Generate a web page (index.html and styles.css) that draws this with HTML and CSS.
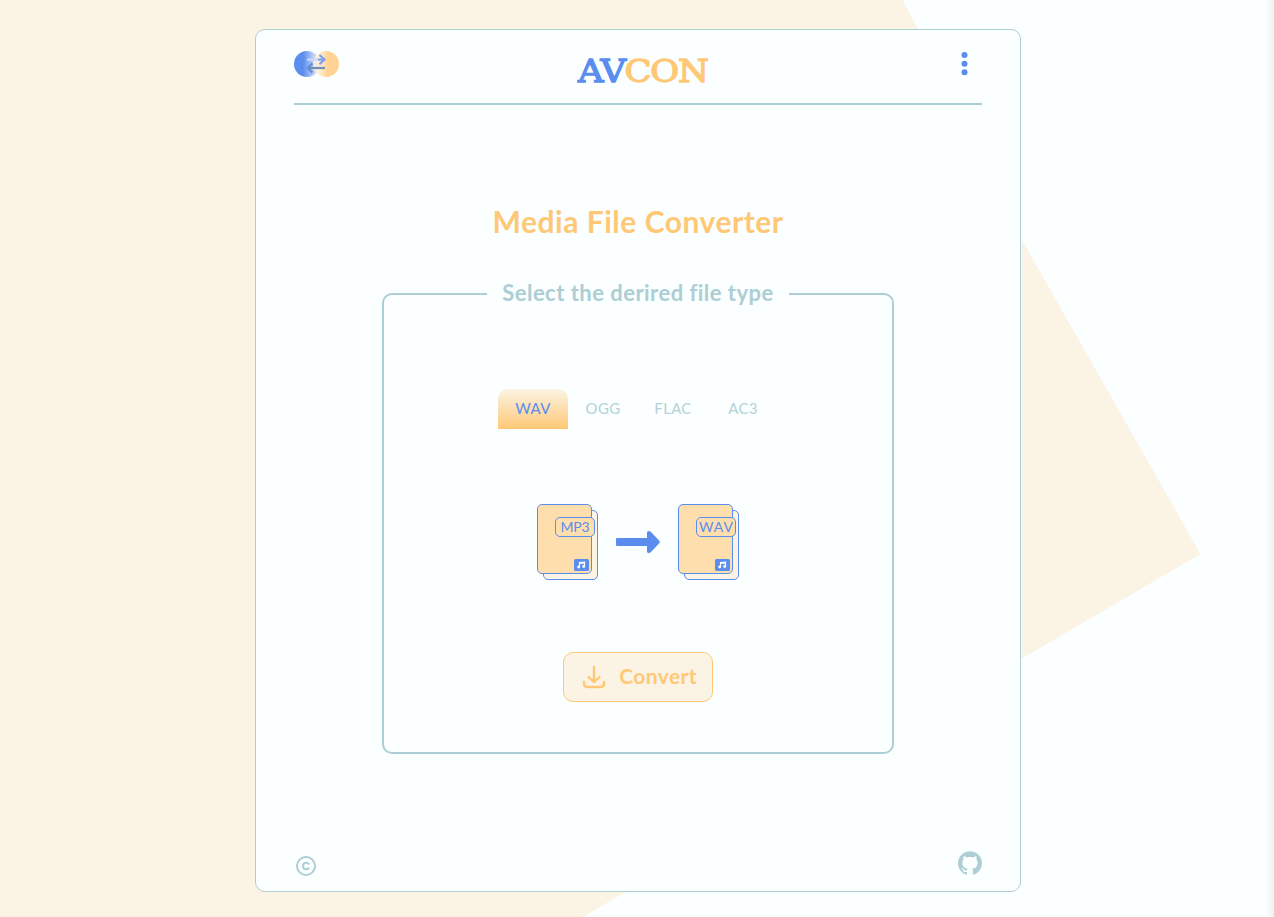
FILE: index.html
```html
<!DOCTYPE html>
<html lang="en">
<head>
<meta charset="utf-8">
<title>AVCON</title>
<link rel="stylesheet" href="styles.css">
</head>
<body>
<svg class="backdrop" viewBox="0 0 1274 917" aria-hidden="true"><path d="M0 0H902.500L918 29L1022 240L1200.500 554L1022 658.500L583 917H0z"/></svg>
<div class="edge"></div>
<div class="card">
  <header class="header">
    <svg class="logo" width="46" height="28" viewBox="0 0 46 28">
      <defs>
        <linearGradient id="blue"><stop offset=".35" stop-color="#5a8dee"/><stop offset="1" stop-color="#fafafd"/></linearGradient>
        <linearGradient id="gold"><stop offset="0" stop-color="#fff9ef" stop-opacity=".6"/><stop offset=".55" stop-color="#ffd394"/></linearGradient>
      </defs>
      <circle cx="13" cy="14" r="13" fill="url(#blue)"/>
      <circle cx="32" cy="14" r="13" fill="url(#gold)"/>
      <g fill="none" stroke-width="2.200">
        <path d="M13 9.600H24" stroke="#c9d9f6"/>
        <path d="M24 9.600H30" stroke="#7ba2ed"/>
        <path d="M25.500 5L30.500 9.600L25.500 14.200" stroke="#7ba2ed"/>
        <path d="M31 18H14" stroke="#7590b4"/>
        <path d="M18.500 13.400L13.800 18L18.500 22.600" stroke="#668bd0"/>
      </g>
    </svg>
    <div class="brand"><span class="brand-av">AV</span><span class="brand-con">CON</span></div>
    <svg class="menu" width="7" height="24" viewBox="0 0 7 24"><circle cx="3.500" cy="3" r="3"/><circle cx="3.500" cy="11.700" r="3"/><circle cx="3.500" cy="20.300" r="3"/></svg>
  </header>
  <main class="main">
    <h1 class="title">Media File Converter</h1>
    <section class="panel">
      <h2 class="legend"><span>Select the derired file type</span></h2>
      <nav class="tabs">
        <div class="tab active">WAV</div><div class="tab">OGG</div><div class="tab">FLAC</div><div class="tab">AC3</div>
      </nav>
      <div class="flow">
        <svg class="file" width="62" height="77" viewBox="0 0 62 77">
          <rect class="back" x="6.500" y="6.500" width="54" height="69" rx="4.500"/>
          <rect class="front" x=".5" y=".5" width="54" height="69" rx="4.500"/>
          <rect class="front" x="18.500" y="13.500" width="39" height="19" rx="4.500"/>
          <text x="38" y="28" textLength="29">MP3</text>
          <rect class="badge" x="37" y="55" width="15" height="12" rx="1.500"/>
          <path class="note" d="M42.500 63V58.600L47.500 58.200V62.500M42.500 59.400L47.500 59"/><circle class="dot" cx="41.700" cy="63" r="1.400"/><circle class="dot" cx="46.700" cy="62.500" r="1.400"/>
        </svg>
        <svg class="arrow" width="44" height="22" viewBox="0 0 44 22"><path d="M1 7H31V1.500Q31 0 33 0Q34 0 35 1L43 9.500Q44.500 11 43 12.500L35 21Q34 22 33 22Q31 22 31 20.500V15H1Q0 15 0 14V8Q0 7 1 7z"/></svg>
        <svg class="file" width="62" height="77" viewBox="0 0 62 77">
          <rect class="back" x="6.500" y="6.500" width="54" height="69" rx="4.500"/>
          <rect class="front" x=".5" y=".5" width="54" height="69" rx="4.500"/>
          <rect class="front" x="18.500" y="13.500" width="39" height="19" rx="4.500"/>
          <text x="38" y="28" textLength="34">WAV</text>
          <rect class="badge" x="37" y="55" width="15" height="12" rx="1.500"/>
          <path class="note" d="M42.500 63V58.600L47.500 58.200V62.500M42.500 59.400L47.500 59"/><circle class="dot" cx="41.700" cy="63" r="1.400"/><circle class="dot" cx="46.700" cy="62.500" r="1.400"/>
        </svg>
      </div>
      <button class="convert">
        <svg width="24" height="24" viewBox="0 0 24 24"><path d="M12 2V17M6.500 12L12 17.200L17.500 12M2 17V18.500Q2 22 5.500 22H18.500Q22 22 22 18.500V17"/></svg>
        <span>Convert</span>
      </button>
    </section>
  </main>
  <footer class="footer">
    <svg class="copyright" width="20" height="20" viewBox="0 0 20 20"><circle cx="10" cy="10" r="9"/><path d="M12.800 8.600C12.500 7.400 11.500 6.700 10 6.700C8 6.700 7 8 7 10C7 12 8 13.300 10 13.300C11.500 13.300 12.500 12.600 12.800 11.400"/></svg>
    <svg class="github" width="24" height="24" viewBox="0 0 24 24"><path d="M12 .297c-6.630 0-12 5.373-12 12 0 5.303 3.438 9.800 8.205 11.385.6.113.82-.258.82-.577 0-.285-.01-1.040-.015-2.040-3.338.724-4.042-1.610-4.042-1.610C4.422 18.070 3.633 17.700 3.633 17.700c-1.087-.744.084-.729.084-.729 1.205.084 1.838 1.236 1.838 1.236 1.070 1.835 2.809 1.305 3.495.998.108-.776.417-1.305.76-1.605-2.665-.3-5.466-1.332-5.466-5.930 0-1.310.465-2.380 1.235-3.220-.135-.303-.54-1.523.105-3.176 0 0 1.005-.322 3.300 1.230.96-.267 1.980-.399 3-.405 1.020.006 2.040.138 3 .405 2.280-1.552 3.285-1.230 3.285-1.230.645 1.653.24 2.873.12 3.176.765.840 1.230 1.910 1.230 3.220 0 4.610-2.805 5.625-5.475 5.920.42.360.81 1.096.81 2.220 0 1.606-.015 2.896-.015 3.286 0 .315.21.690.825.570C20.565 22.092 24 17.592 24 12.297c0-6.627-5.373-12-12-12"/></svg>
  </footer>
</div>
</body>
</html>
```

FILE: styles.css
```css
* { box-sizing: border-box; }
body {
  margin: 0;
  height: 917px;
  padding: 29px 0 25px 255px;
  background: #fbffff;
  font-family: Lato, "Open Sans", sans-serif;
  overflow: hidden;
}
.backdrop { position: absolute; left: 0; top: 0; width: 1274px; height: 917px; fill: #fbf4e4; }
.edge { position: absolute; right: 0; top: 0; width: 9px; height: 917px; background: linear-gradient(90deg, #fbffff, #eef2f1); }
.card {
  position: relative;
  width: 766px;
  height: 863px;
  padding: 0 38px;
  display: flex;
  flex-direction: column;
  background: #fbffff;
  border: 1px solid #acced4;
  border-radius: 10px;
}
.header {
  height: 75px;
  display: grid;
  grid-template-columns: 1fr auto 1fr;
  align-items: start;
  border-bottom: 2px solid #acced4;
}
.logo { margin-top: 20px; }
.brand {
  margin: 22px 0 0 10px;
  font: 31px/38px "DejaVu Serif", serif;
  letter-spacing: -1.2px;
  -webkit-text-stroke-width: 1.3px;
  transform: scaleX(1.14);
}
.brand-av { color: #5a8dee; }
.brand-con { color: #ffc876; }
.menu { justify-self: end; margin: 22px 14px 0 0; fill: #5a8dee; }
.main { flex: 1; display: flex; flex-direction: column; align-items: center; }
.title {
  margin: 96px 0 0;
  font-size: 30px;
  line-height: 40px;
  font-weight: 700;
  letter-spacing: .52px;
  color: #ffc876;
  white-space: nowrap;
}
.panel {
  width: 512px;
  height: 461px;
  margin-top: 52px;
  border: 2px solid #acced4;
  border-radius: 10px;
  display: flex;
  flex-direction: column;
  align-items: center;
}
.legend {
  width: 302px;
  height: 30px;
  margin: -17px 0 0;
  background: #fbffff;
  color: #acced4;
  font-size: 22px;
  line-height: 30px;
  font-weight: 700;
  letter-spacing: .47px;
  text-align: center;
  white-space: nowrap;
}
.tabs { display: flex; margin-top: 81px; }
.tab {
  width: 70px;
  height: 40px;
  line-height: 38px;
  text-align: center;
  font-size: 15px;
  letter-spacing: .3px;
  color: #b3d2d7;
}
.active { color: #5a8dee; border-radius: 10px 10px 0 0; background: linear-gradient(#fbf4e4, #ffc876); }
.flow { display: flex; align-items: center; margin: 75px 0 0 1px; }
.arrow { margin: 0 18px 2px 17px; }
.file text { font-size: 14px; fill: #5a8dee; text-anchor: middle; }
.back { fill: #fbf4e4; stroke: #5a8dee; }
.front { fill: #ffdeae; stroke: #5a8dee; }
.badge, .arrow { fill: #5a8dee; }
.note { fill: none; stroke: #fff; stroke-width: 1.200; }
.dot { fill: #fff; }
.convert {
  width: 150px;
  height: 50px;
  margin-top: 71px;
  padding: 0 15px 0 18px;
  display: flex;
  align-items: center;
  justify-content: space-between;
  border: 1px solid #ffc876;
  border-radius: 10px;
  background: #fbf4e4;
  color: #ffc876;
  font: 700 21px/30px Lato, "Open Sans", sans-serif;
  letter-spacing: .4px;
}
.convert span { margin-bottom: 2px; }
.convert svg { fill: none; stroke: #ffc876; stroke-width: 2.400; stroke-linecap: round; stroke-linejoin: round; }
.footer { height: 42px; display: flex; justify-content: space-between; align-items: flex-start; }
.copyright { margin: 7px 0 0 2px; fill: none; stroke: #acced4; stroke-width: 2; }
.github { margin-top: 2px; fill: #acced4; }
```
